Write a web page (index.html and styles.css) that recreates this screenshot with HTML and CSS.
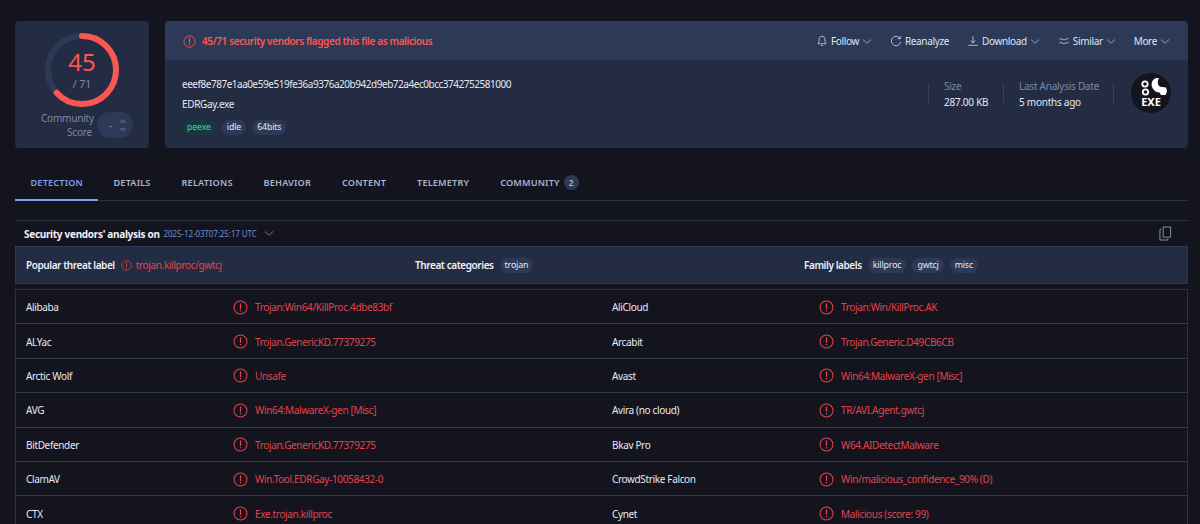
FILE: index.html
```html
<!DOCTYPE html>
<html lang="en">
<head>
<meta charset="utf-8">
<title>VirusTotal</title>
<link rel="stylesheet" href="styles.css">
</head>
<body>
<svg class="defs" width="0" height="0" aria-hidden="true">
  <symbol id="alert" viewBox="0 0 16 16"><circle cx="8" cy="8" r="6.900" fill="none" stroke="currentColor" stroke-width="1.100"/><path d="M8 4.200v4.800" fill="none" stroke="currentColor" stroke-width="1.300" stroke-linecap="round"/><circle cx="8" cy="11.400" r=".8" fill="currentColor"/></symbol>
  <symbol id="chev" viewBox="0 0 12 8"><path d="M1 1.500 6 6l5-4.500" fill="none" stroke="currentColor" stroke-width="1"/></symbol>
</svg>
<header class="top">
  <section class="score card">
    <div class="donut">
      <svg class="ring" viewBox="0 0 76 76" width="76" height="76">
        <circle cx="38" cy="38" r="34" fill="none" stroke="#2c3a58" stroke-width="6"/>
        <circle cx="38" cy="38" r="34" fill="none" stroke="#fb5750" stroke-width="6" stroke-dasharray="63.400 100" stroke-linecap="round" pathLength="100"/>
      </svg>
      <div class="donut-text"><span class="num">45</span><span class="den">/ 71</span></div>
    </div>
    <div class="community">
      <span class="community-label">Community<br>Score</span>
      <span class="vote"><span class="dash">-</span><span class="arrows"><i class="up"></i><i class="down"></i></span></span>
    </div>
  </section>
  <section class="summary card">
    <div class="bar">
      <div class="flag"><svg class="ico"><use href="#alert"/></svg><span>45/71 security vendors flagged this file as malicious</span></div>
      <nav class="actions">
        <a><svg class="aico" viewBox="0 0 14 14"><path d="M7 1.500c-2.300 0-3.300 1.700-3.300 3.500 0 3-.9 4.500-1.400 5.200h9.400c-.5-.7-1.400-2.200-1.400-5.200 0-1.800-1-3.500-3.300-3.500ZM5.800 12.300h2.400" fill="none" stroke="currentColor"/></svg>Follow<svg class="chev"><use href="#chev"/></svg></a>
        <a><svg class="aico" viewBox="0 0 14 14"><path d="M11.800 4.200A5.500 5.500 0 1 0 12.500 8M12 1.300v3h-3" fill="none" stroke="currentColor"/></svg>Reanalyze</a>
        <a><svg class="aico" viewBox="0 0 14 14"><path d="M7 1.500v7.500M4.200 6.500 7 9.300l2.800-2.800M1.500 12h11" fill="none" stroke="currentColor"/></svg>Download<svg class="chev"><use href="#chev"/></svg></a>
        <a><svg class="aico" viewBox="0 0 14 14"><path d="M1.500 5c2.500-2 4 1 6 .5 1.500-.3 2.500-1.500 5-1M1.500 9.500c2.500-2 4 1 6 .5 1.500-.3 2.500-1.500 5-1" fill="none" stroke="currentColor"/></svg>Similar<svg class="chev"><use href="#chev"/></svg></a>
        <a>More<svg class="chev"><use href="#chev"/></svg></a>
      </nav>
    </div>
    <div class="info">
      <div class="file">
        <div class="hash">eeef8e787e1aa0e59e519fe36a9376a20b942d9eb72a4ec0bcc3742752581000</div>
        <div class="fname">EDRGay.exe</div>
        <div class="tags"><span class="tag green">peexe</span><span class="tag">idle</span><span class="tag">64bits</span></div>
      </div>
      <div class="meta m-size"><span class="lbl">Size</span><span class="val">287.00 KB</span></div>
      <div class="meta m-date"><span class="lbl">Last Analysis Date</span><span class="val">5 months ago</span></div>
      <div class="meta-end">
        <div class="exe">
          <svg viewBox="0 0 40 40" width="40" height="40">
            <circle cx="20" cy="20" r="20" fill="#14141f"/>
            <circle cx="14" cy="11" r="2.700" fill="none" stroke="#fff" stroke-width="1.800"/>
            <circle cx="14.500" cy="19" r="2.700" fill="none" stroke="#fff" stroke-width="1.800"/>
            <path d="M25 5c-4 1.500-5.500 6-3.500 10 1.500 3 4.500 4.500 7 4.500l1.500 2.500h4.500l1.500-3.500-1-4-3.500-.5c-2 .5-4-1-4.500-3-.5-2 0-4 1-6Z" fill="#fff"/>
            <text class="exe-t" x="20" y="33">EXE</text>
          </svg>
        </div>
      </div>
    </div>
  </section>
</header>

<nav class="tabs">
  <a class="tab active">DETECTION</a><a class="tab">DETAILS</a><a class="tab">RELATIONS</a><a class="tab">BEHAVIOR</a><a class="tab">CONTENT</a><a class="tab">TELEMETRY</a><a class="tab">COMMUNITY<span class="badge">2</span></a>
</nav>

<section class="analysis">
  <div class="analysis-head">
    <strong>Security vendors' analysis on</strong>
    <span class="stamp">2025-12-03T07:25:17 UTC</span>
    <svg class="chev blue"><use href="#chev"/></svg>
    <svg class="copy" viewBox="0 0 14 16"><path d="M4.500 1h8v11h-8zM2.500 3.500H1V15h8.500v-1.500" fill="none" stroke="currentColor"/></svg>
  </div>
  <div class="threat">
    <div class="tcol c1"><b>Popular threat label</b><svg class="ico small"><use href="#alert"/></svg><span class="red">trojan.killproc/gwtcj</span></div>
    <div class="tcol c2"><b>Threat categories</b><span class="tag">trojan</span></div>
    <div class="tcol c3"><b>Family labels</b><span class="tag">killproc</span><span class="tag">gwtcj</span><span class="tag">misc</span></div>
  </div>
  <div class="vendors">
    <div class="row"><span class="v">Alibaba</span><span class="r"><svg class="ico big"><use href="#alert"/></svg>Trojan:Win64/KillProc.4dbe83bf</span><span class="v">AliCloud</span><span class="r"><svg class="ico big"><use href="#alert"/></svg>Trojan:Win/KillProc.AK</span></div>
    <div class="row"><span class="v">ALYac</span><span class="r"><svg class="ico big"><use href="#alert"/></svg>Trojan.GenericKD.77379275</span><span class="v">Arcabit</span><span class="r"><svg class="ico big"><use href="#alert"/></svg>Trojan.Generic.D49CB6CB</span></div>
    <div class="row"><span class="v">Arctic Wolf</span><span class="r"><svg class="ico big"><use href="#alert"/></svg>Unsafe</span><span class="v">Avast</span><span class="r"><svg class="ico big"><use href="#alert"/></svg>Win64:MalwareX-gen [Misc]</span></div>
    <div class="row"><span class="v">AVG</span><span class="r"><svg class="ico big"><use href="#alert"/></svg>Win64:MalwareX-gen [Misc]</span><span class="v">Avira (no cloud)</span><span class="r"><svg class="ico big"><use href="#alert"/></svg>TR/AVI.Agent.gwtcj</span></div>
    <div class="row"><span class="v">BitDefender</span><span class="r"><svg class="ico big"><use href="#alert"/></svg>Trojan.GenericKD.77379275</span><span class="v">Bkav Pro</span><span class="r"><svg class="ico big"><use href="#alert"/></svg>W64.AIDetectMalware</span></div>
    <div class="row"><span class="v">ClamAV</span><span class="r"><svg class="ico big"><use href="#alert"/></svg>Win.Tool.EDRGay-10058432-0</span><span class="v">CrowdStrike Falcon</span><span class="r"><svg class="ico big"><use href="#alert"/></svg>Win/malicious_confidence_90% (D)</span></div>
    <div class="row"><span class="v">CTX</span><span class="r"><svg class="ico big"><use href="#alert"/></svg>Exe.trojan.killproc</span><span class="v">Cynet</span><span class="r"><svg class="ico big"><use href="#alert"/></svg>Malicious (score: 99)</span></div>
  </div>
</section>
</body>
</html>
```
FILE: styles.css
```css
* { box-sizing: border-box; }
html, body { height: 524px; overflow: hidden; }
body {
  margin: 0;
  padding: 21px 12px 0 15px;
  background: #14141f;
  color: #e6e9f2;
  font: 10px/14px "Noto Sans", sans-serif;
  letter-spacing: -.35px;
}
.defs { display: block; height: 0; }
svg { display: block; flex: none; }
.card { background: #232c43; border-radius: 4px; }
.top { display: flex; gap: 16px; height: 127px; }

.score { width: 134px; padding: 11px 0 0 29px; }
.donut { display: grid; width: 76px; height: 76px; }
.ring { grid-area: 1 / 1; transform: rotate(-90deg); }
.donut-text { grid-area: 1 / 1; display: flex; flex-direction: column; align-items: center; padding-top: 16px; }
.num { font-size: 24px; line-height: 28px; color: #fb5750; letter-spacing: 0; }
.den { font-size: 10.500px; line-height: 14px; color: #7c88a6; margin-top: 1px; letter-spacing: 0; }
.community { display: flex; align-items: center; gap: 5px; margin: 3px 0 0 -3px; }
.community-label { color: #7c88a6; text-align: right; line-height: 14px; width: 51px; flex: none; white-space: nowrap; letter-spacing: -.2px; }
.vote { display: flex; align-items: center; justify-content: space-between; width: 36px; height: 26px; border-radius: 13px; background: #2c3a58; padding: 0 6px 0 12px; color: #7c88a6; flex: none; }
.arrows { display: flex; flex-direction: column; gap: 5px; }
.up, .down { display: block; width: 0; height: 0; border-left: 4px solid transparent; border-right: 4px solid transparent; }
.up { border-bottom: 4px solid #4a5878; }
.down { border-top: 4px solid #4a5878; }

.summary { width: 1023px; display: flex; flex-direction: column; }
.bar { height: 39px; background: #2c3a58; border-radius: 4px 4px 0 0; display: flex; align-items: center; justify-content: space-between; padding: 1px 18px 0; }
.flag { display: flex; align-items: center; gap: 6px; color: #fb5750; font-weight: 600; letter-spacing: -.39px; }
.ico { width: 13px; height: 13px; color: #fb5750; }
.actions { display: flex; gap: 18px; color: #dfe4f0; }
.actions a { display: flex; align-items: center; gap: 3px; }
.aico { width: 12px; height: 12px; color: #c5cce0; }
.chev { width: 10px; height: 7px; color: #aab3ca; }

.info { display: flex; align-items: flex-start; padding: 17px 0 0 17px; }
.file { flex: 1; }
.hash { line-height: 14px; letter-spacing: -.47px; }
.fname { margin-top: 6px; }
.tags { display: flex; gap: 6px; margin-top: 9px; }
.tag { display: inline-block; height: 15px; line-height: 15px; padding: 0 5px; border-radius: 8px; background: #2c3a58; color: #e6e9f2; font-size: 8.800px; letter-spacing: -.15px; }
.tag.green { background: #17383f; color: #3fd6a5; }
.meta { display: flex; flex-direction: column; height: 20px; margin-top: 6px; border-left: 1px solid #36425f; padding-left: 15px; }
.meta > span { display: block; white-space: nowrap; }
.m-size { width: 75px; }
.m-date { width: 110px; }
.lbl { color: #7c88a6; line-height: 14px; margin-top: -4px; letter-spacing: -.25px; }
.val { line-height: 14px; margin-top: 2px; letter-spacing: -.25px; }
.meta-end { border-left: 1px solid #36425f; height: 20px; margin-top: 6px; padding-left: 17px; width: 75px; }
.exe { margin-top: -10px; }
.exe-t { font: 700 11px "Noto Sans", sans-serif; fill: #fff; text-anchor: middle; letter-spacing: 0; }

.tabs { display: flex; margin-top: 21px; height: 32px; border-bottom: 1px solid #2b3245; }
.tab { display: flex; align-items: flex-start; padding: 7px 15.500px 0; height: 32px; font-weight: 600; color: #aab3ca; font-size: 9.200px; letter-spacing: .14px; }
.tab.active { color: #7aa0ee; border-bottom: 2px solid #7aa0ee; width: 83px; }
.badge { display: inline-block; width: 15px; height: 15px; line-height: 15px; margin-left: 4px; border-radius: 50%; background: #2c3a58; text-align: center; font-size: 9px; margin-top: -1px; }

.analysis { margin-top: 19px; border-top: 1px solid #2b3245; }
.analysis-head { display: flex; align-items: center; height: 25px; padding: 0 16px 0 9px; gap: 4px; }
.analysis-head strong { font-weight: 700; color: #eef1f8; letter-spacing: -.3px; }
.stamp { font-size: 8px; color: #6d8fdb; letter-spacing: -.09px; }
.chev.blue { color: #6d8fdb; margin-left: 3px; }
.copy { margin-left: auto; width: 13px; height: 15px; color: #8d97b0; }
.threat { display: flex; height: 38px; align-items: center; background: #232c43; border: 1px solid #2f3850; padding-left: 10px; }
.tcol { display: flex; align-items: center; }
.tcol b { font-weight: 600; color: #eef1f8; letter-spacing: -.42px; }
.c1 { width: 389px; gap: 6px; }
.c2 { width: 389px; gap: 6px; }
.c3 { gap: 6px; }
.small { width: 11px; height: 11px; color: #e2434b; }
.red, .r { color: #e2434b; }
.small + .red { margin-left: -2px; }

.vendors { margin-top: 5px; border: 1px solid #2b3245; border-bottom: 0; }
.row { display: grid; grid-template-columns: 206px 380px 206px 1fr; align-items: center; height: 34.400px; padding: 1px 0 0 10px; border-bottom: 1px solid #2f3850; }
.v { color: #e6e9f2; }
.r { display: flex; align-items: center; gap: 7px; margin-left: 1px; }
.big { width: 15px; height: 15px; color: #e2434b; flex: none; }
```
